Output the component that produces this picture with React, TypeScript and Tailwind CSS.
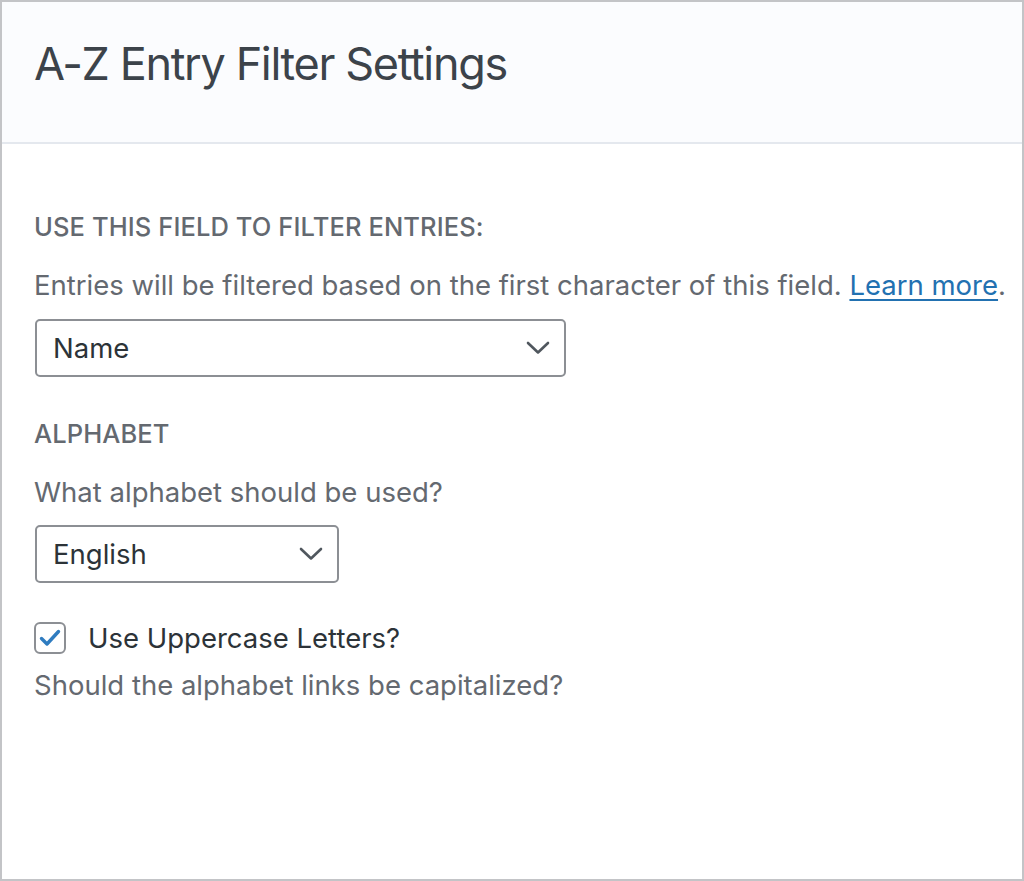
import React from 'react';

const font = { fontFamily: 'Inter, "Noto Sans", sans-serif' };

function Chevron() {
  return (
    <svg width="24" height="14" viewBox="0 0 24 14" fill="none">
      <path d="M2 2 L12 11.5 L22 2" stroke="#50575e" strokeWidth="2.6" strokeLinecap="round" strokeLinejoin="round" />
    </svg>
  );
}

function Select({ value, width }: { value: string; width: string }) {
  return (
    <div className={`${width} flex h-[58px] items-center justify-between rounded-[5px] border-2 border-[#8c8f94] bg-white pl-[16px] pr-[14px]`}>
      <span className="text-[27.5px] leading-[36px] text-[#2c3338]">{value}</span>
      <Chevron />
    </div>
  );
}

export default function App() {
  return (
    <div className="flex h-[881px] w-[1024px] flex-col border-2 border-[#c3c4c7] bg-white" style={font}>
      {/* Header */}
      <div className="h-[142px] border-b-2 border-[#e4e8ee] bg-[#fbfcfe] pl-[32px] pt-[35px]">
        <h1 className="text-[45px] font-normal leading-[54px] tracking-[-1.35px] text-[#3c434a]">A-Z Entry Filter Settings</h1>
      </div>

      {/* Body */}
      <div className="flex flex-col px-[32px] pt-[68px]">
        <div className="text-[25.5px] font-medium uppercase leading-[30px] tracking-[0.1px] text-[#646970]">
          Use this field to filter entries:
        </div>
        <p className="mt-[25px] whitespace-nowrap text-[27.5px] leading-[36px] text-[#646970]">
          Entries will be filtered based on the first character of this field.{' '}
          <a href="#" className="text-[#2271b1] underline decoration-[2px] underline-offset-[4px]">Learn more</a>.
        </p>
        <div className="mt-[16px] pl-[1px]">
          <Select value="Name" width="w-[531px]" />
        </div>

        <div className="mt-[42px] text-[25.5px] font-medium uppercase leading-[30px] tracking-[0.1px] text-[#646970]">
          Alphabet
        </div>
        <p className="mt-[25px] text-[27.5px] leading-[36px] text-[#646970]">
          What alphabet should be used?
        </p>
        <div className="mt-[15px] pl-[1px]">
          <Select value="English" width="w-[304px]" />
        </div>

        <label className="mt-[37px] flex h-[36px] items-center gap-[22px]">
          <span className="flex h-[32px] w-[32px] items-center justify-center rounded-[6px] border-2 border-[#8c8f94] bg-white">
            <svg width="22" height="18" viewBox="0 0 22 18" fill="none">
              <path d="M2.5 9.5 L8 15 L19.5 2.5" stroke="#2f7cc0" strokeWidth="3.4" strokeLinecap="round" strokeLinejoin="round" />
            </svg>
          </span>
          <span className="text-[27.5px] leading-[36px] text-[#2c3338]">Use Uppercase Letters?</span>
        </label>
        <p className="mt-[11px] text-[27.5px] leading-[36px] text-[#646970]">
          Should the alphabet links be capitalized?
        </p>
      </div>
    </div>
  );
}
